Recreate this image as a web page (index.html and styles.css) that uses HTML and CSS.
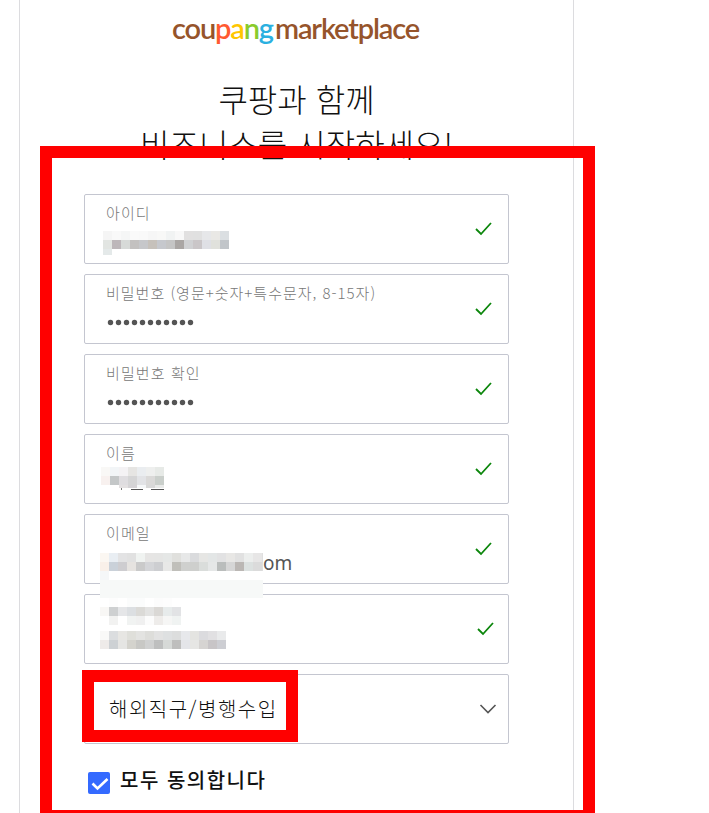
FILE: index.html
```html
<!DOCTYPE html>
<html lang="ko">
<head>
  <meta charset="UTF-8">
  <meta name="viewport" content="width=device-width, initial-scale=1.0">
  <title>coupang marketplace</title>

  <link rel="stylesheet" href="styles.css">
</head>
<body>
  <div id="container">
    <div class="logo">
      <div class="coupang">cou<span class="p">p</span><span class="a">a</span><span class="n">n</span><span class="g">g</span></div>
      <div class="marketplace">marketplace</div>
    </div>

    <h1 class="title">쿠팡과 함께<br>비즈니스를 시작하세요!</h1>

    <form class="join">
      <div class="field">
        <label>아이디</label>
        <svg class="check" viewBox="0 0 18 14"><path d="M1 7l5 5L16 1"/></svg>
        <div class="mosaic id" data-mosaic="id"></div>
      </div>
      <div class="field">
        <label class="wide">비밀번호 (영문+숫자+특수문자, 8-15자)</label>
        <svg class="dots" width="90" height="8"></svg>
        <svg class="check" viewBox="0 0 18 14"><path d="M1 7l5 5L16 1"/></svg>
      </div>
      <div class="field">
        <label>비밀번호 확인</label>
        <svg class="dots" width="90" height="8"></svg>
        <svg class="check" viewBox="0 0 18 14"><path d="M1 7l5 5L16 1"/></svg>
      </div>
      <div class="field">
        <label>이름</label>
        <svg class="check" viewBox="0 0 18 14"><path d="M1 7l5 5L16 1"/></svg>
        <div class="mosaic name" data-mosaic="name"></div>
      </div>
      <div class="field">
        <label>이메일</label>
        <p class="value">om</p>
        <svg class="check" viewBox="0 0 18 14"><path d="M1 7l5 5L16 1"/></svg>
        <div class="mosaic email" data-mosaic="email"></div>
      </div>
      <div class="field">
        <svg class="check last" viewBox="0 0 18 14"><path d="M1 7l5 5L16 1"/></svg>
        <div class="mosaic label" data-mosaic="label"></div>
        <div class="mosaic phone" data-mosaic="phone"></div>
      </div>
      <div class="field select">
        <span>해외직구/병행수입</span>
        <svg class="arrow" viewBox="0 0 18 10"><path d="M1.5 1L9 8.5 16.500 1"/></svg>
        <div class="mark"></div>
      </div>
      <div class="agree">
        <svg width="22" height="22" viewBox="0 0 22 22"><rect width="22" height="22" rx="2" fill="#346aff"/><path d="M4.500 11.500l5 5L19.500 7" fill="none" stroke="#fff" stroke-width="2.600"/></svg>
        <span>모두 동의합니다</span>
      </div>
    </form>
  </div>

  <div id="frame"></div>

  <script>
    // x, y, height, colors of each 9px cell, width if not 9
    var mosaics = {
      id: [
        [0, 0, 9, '#f5f5f5 #f9f9f9 #f5f6f6 #fafafa #f9f9f9 #f6f6f6 #f8f8f7 #f1f3f3 #f8f8f8 #e1e0e0 #e0e0e0 #e6e7e9 #e9e8e5 #dbdfe2'],
        [0, 9, 9, '#e2e5e2 #bdb7ba #d7dad8 #c3c1c0 #c6c7ca #c6c1bb #c6c8cd #c5c5c5 #aaa6a4 #d0d1d3 #cac6c8 #dfe0e5 #e0e1dc #c1c5c9'],
        [0, 18, 6, '#e4e9e9']
      ],
      name: [
        [0, 0, 9, '#f9f8f6 #f2f5f7 #f4f2f4 #e6e5e3 #eaedf0 #eeefee #e7eae7'],
        [0, 9, 9, '#f8f1ef #c4c7c8 #dfdde0 #d5d5d6 #e2e3e6 #dad9d8 #cacfcb'],
        [18, 18, 3, '#e3e0e1 #d5d3d6 #f5f7f8 #d8d8d8 #e9eae9'],
        [20, 21, 2, '#777', 1],
        [30, 22, 1, '#555', 12],
        [50, 22, 1, '#555', 13]
      ],
      email: [
        [154, 0, 18, '#dfdfdf'],
        [0, 0, 9, '#fbf7f2 #e9eef3 #e3e3e4 #e1e1e1 #f0f3f1 #e6e5e4 #e5e5e4 #e5e7e6 #e0e0dd #e7e8e8 #dadbdd #e6e6e4 #e3e6e6 #e2e2e3 #e8e7e5 #e1e1e1 #eceeed #e7e6e6'],
        [0, 9, 9, '#f9f0e9 #cad1d9 #cecdd0 #e6e3e0 #cacaca #d4d5d8 #cdced1 #e8e8e7 #c0bfba #cfd0ce #cecfcd #dadddb #e5e7e7 #babdbc #d6d6d6 #bbb7b4 #dce1e0 #dbdbdb'],
        [0, 18, 9, '#f5f7f8'],
        [9, 18, 9, '#fff', 154],
        [0, 27, 18, '#f7f9f8', 163]
      ],
      label: [
        [9, 0, 9, '#fdfdfd #fff #fbfcfc #fbfcfc #fff #fcfcfc #fdfdfd'],
        [0, 9, 9, '#f8f7f5 #ced0d1 #e5e6e8 #dcdfe2 #dbdad7 #e3e3e2 #dad8d5 #e7ebeb #e2e3e5'],
        [9, 18, 9, '#f2f2f1 #fff #f1f3f2 #f0f0f0 #fcfcfc #eeecea #f6f6f5 #f0f3f2']
      ],
      phone: [
        [0, 0, 9, '#f9f9f8 #dbdddf #e7e6e3 #dfdfda #e3e3e1 #ddddda #e2e2e2 #dee0e1 #dcdddd #e7e8eb #e4e4e1 #dbdbde #e1e0e2 #e9eaeb'],
        [0, 9, 9, '#eeebe9 #cdd1d4 #e5e5e3 #d4d3cd #c8c8c5 #d0d1d1 #bebfbf #d6d9d7 #bebebd #e4e5e9 #e6e6e4 #d6d4d2 #c8c5c7 #cdced3']
      ]
    }

    function rect(x, y, w, h, color) {
      return '<rect x="' + x + '" y="' + y + '" width="' + w + '" height="' + h + '" fill="' + color + '"/>'
    }

    var aMosaic = document.querySelectorAll('.mosaic')
    for(var i=0; i<aMosaic.length; i++) {
      var html = ''
      mosaics[aMosaic[i].dataset.mosaic].forEach(function(row) {
        row[3].split(' ').forEach(function(color, j) {
          html += rect(row[0] + j * 9, row[1], row[4] || 9, row[2], color)
        })
      })
      aMosaic[i].innerHTML = '<svg width="170" height="45" shape-rendering="crispEdges">' + html + '</svg>'
    }

    var aDots = document.querySelectorAll('.dots')
    for(var i=0; i<aDots.length; i++) {
      var dots = ''
      for(var j=0; j<11; j++) {
        dots += '<circle cx="' + (3.5 + j * 8) + '" cy="4.5" r="2.7"/>'
      }
      aDots[i].innerHTML = dots
    }
  </script>
</body>
</html>
```
FILE: styles.css
```css
* {
  box-sizing: border-box;
}

body {
  margin: 0;
  height: 813px;
  overflow: hidden;
  background: #fff;
  color: #111;
  font-family: "Noto Sans CJK KR", sans-serif;
}

#container {
  width: 555px;
  height: 813px;
  margin-left: 19px;
  padding: 7px 64px 0;
  border-left: 1px solid #dcdcdf;
  border-right: 1px solid #dcdcdf;
}

.logo {
  display: flex;
  height: 44px;
  padding-left: 88px;
  font: 600 29px/42px "Lato", sans-serif;
  letter-spacing: -1.15px;
  color: #96542b;
}

.coupang {
  width: 103px;
}

.coupang .p {
  color: #ff5a30;
}

.coupang .a {
  color: #ffc600;
}

.coupang .n {
  color: #8acb2c;
}

.coupang .g {
  color: #2bb0e0;
}

.title {
  margin: 25px 0 0;
  font-size: 32px;
  font-weight: 300;
  line-height: 45px;
  text-align: center;
  white-space: nowrap;
}

.join {
  display: flex;
  flex-direction: column;
  gap: 10px;
  margin-top: 28px;
}

.field {
  position: relative;
  height: 70px;
  padding: 8px 21px 0;
  border: 1px solid #c4c6d0;
  border-radius: 2px;
}

.field label {
  display: block;
  font-size: 15px;
  font-weight: 300;
  line-height: 20px;
  letter-spacing: 1.1px;
  color: #777;
  white-space: nowrap;
}

.field label.wide {
  letter-spacing: 1px;
}

.check {
  position: absolute;
  top: 27px;
  right: 15px;
  width: 18px;
  height: 14px;
  fill: none;
  stroke: #0b860b;
  stroke-width: 1.8;
}

.check.last {
  right: 13px;
}

.dots {
  display: block;
  margin: 15px 0 0 1px;
  fill: #555;
}

.value {
  margin: 8px 0 0 157px;
  font: 19px/24px "Noto Sans", sans-serif;
  color: #555;
}

.mosaic {
  position: absolute;
  z-index: 1;
}

.mosaic svg {
  display: block;
}

.mosaic.id {
  left: 18px;
  top: 36px;
}

.mosaic.name {
  left: 16px;
  top: 32px;
}

.mosaic.email {
  left: 15px;
  top: 38px;
}

.mosaic.label {
  left: 15px;
  top: 3px;
}

.mosaic.phone {
  left: 15px;
  top: 36px;
}

.select {
  display: flex;
  align-items: center;
  justify-content: space-between;
  padding: 0 11px 0 24px;
  font-size: 20px;
  font-weight: 300;
  letter-spacing: 1.5px;
}

.select span {
  padding-bottom: 2px;
}

.arrow {
  width: 18px;
  height: 10px;
  fill: none;
  stroke: #555;
  stroke-width: 1.6;
}

.mark {
  position: absolute;
  left: -3px;
  top: -5px;
  width: 216px;
  height: 72px;
  border: 12px solid #f00;
}

.agree {
  display: flex;
  align-items: center;
  gap: 10px;
  margin: 17px 0 0 4px;
  font-size: 20px;
  font-weight: 500;
  letter-spacing: 1.5px;
  line-height: 30px;
}

.agree span {
  margin: -6px 0 0;
}

#frame {
  position: absolute;
  left: 40px;
  top: 146px;
  width: 555px;
  height: 676px;
  border: 12px solid #f00;
}
```
